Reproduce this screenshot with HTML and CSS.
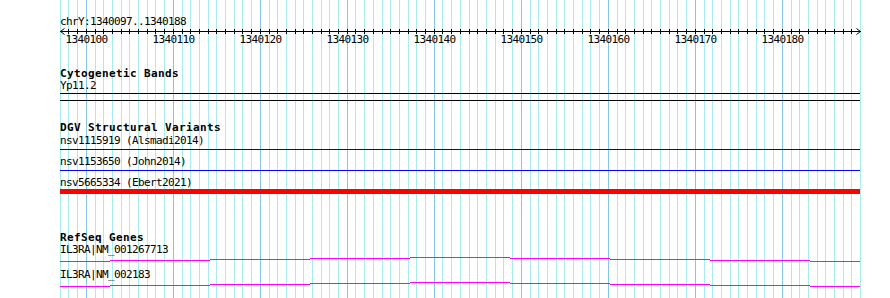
FILE: index.html
```html
<!DOCTYPE html>
<html lang="en">

<head>
    <meta charset="UTF-8">
    <meta name="viewport" content="width=device-width, initial-scale=1.0">
    <title>chrY:1340097..1340188</title>
    <link rel="stylesheet" href="styles.css">
</head>

<body>
    <div class="view">
        <svg class="grid" id="grid" width="890" height="298"></svg>
        <div class="tracks">
            <div class="locus">chrY:1340097..1340188</div>
            <svg class="ruler" id="ruler" width="802" height="20"></svg>

            <div class="track cyto">
                <div class="track_title">Cytogenetic Bands</div>
                <div class="label">Yp11.2</div>
                <div class="band"></div>
            </div>

            <div class="track dgv">
                <div class="track_title">DGV Structural Variants</div>
                <div class="label first">nsv1115919 (Alsmadi2014)</div>
                <div class="sv sv_loss"></div>
                <div class="label">nsv1153650 (John2014)</div>
                <div class="sv sv_gain"></div>
                <div class="label">nsv5665334 (Ebert2021)</div>
                <div class="sv sv_big"></div>
            </div>

            <div class="track genes">
                <div class="track_title">RefSeq Genes</div>
                <div class="label first">IL3RA|NM_001267713</div>
                <svg class="gene" width="800" height="7">
                    <path d="M0 5.5H50M50 4.5H150M150 3.5H250M250 2.5H350M350 1.5H450M450 2.5H550M550 3.5H650M650 4.5H750M750 5.5H800" />
                </svg>
                <div class="label">IL3RA|NM_002183</div>
                <svg class="gene" width="800" height="7">
                    <path d="M0 5.5H50M50 4.5H150M150 3.5H250M250 2.5H350M350 1.5H450M450 2.5H550M550 3.5H650M650 4.5H750M750 5.5H800" />
                </svg>
            </div>
        </div>
    </div>
    <script>
        var start = 1340097;
        var bases = 93;
        var ns = "http://www.w3.org/2000/svg";
        var grid = document.getElementById("grid");
        var ruler = document.getElementById("ruler");

        function col(i) {
            return Math.floor(60.2 + i * 8.7);
        }

        function el(name, attrs, parent) {
            var node = document.createElementNS(ns, name);
            for (var k in attrs) node.setAttribute(k, attrs[k]);
            parent.appendChild(node);
            return node;
        }

        // base line of the ruler, with arrow heads
        el("rect", { x: 0, y: 3, width: 801, height: 1, fill: "#000" }, ruler);
        el("path", { d: "M4.5 0.5L0.5 3.5L4.5 6.5", "class": "arrow" }, ruler);
        el("path", { d: "M796.5 0.5L800.5 3.5L796.5 6.5", "class": "arrow" }, ruler);

        for (var i = 0; i < bases; i++) {
            var x = col(i);
            var major = (start + i) % 10 == 0;
            el("rect", { x: x, y: 0, width: 1, height: 298, "class": major ? "major" : "minor" }, grid);
            if (i > 0 && i < bases - 1) el("rect", { x: x - 60, y: 1, width: 1, height: 5, fill: "#000" }, ruler);
            if (major) {
                var t = el("text", { x: x - 60 + 0.5, y: 14.5, "class": "tick_label" }, ruler);
                t.textContent = start + i;
            }
        }
    </script>
</body>

</html>
```

FILE: styles.css
```css
* {
    box-sizing: border-box;
}

body {
    margin: 0;
    background: #fff;
    color: #000;
    font-family: "DejaVu Sans Mono", "Liberation Mono", monospace;
    font-size: 11px;
    letter-spacing: -0.62px;
    line-height: 12px;
}

.view {
    position: relative;
    width: 890px;
    height: 298px;
    overflow: hidden;
}

.grid {
    position: absolute;
    top: 0;
    left: 0;
}

.grid .minor {
    fill: #a8ecef;
}

.grid .major {
    fill: #86c6ea;
}

.tracks {
    position: relative;
    width: 862px;
    padding-left: 60px;
}

.locus {
    padding-top: 16px;
    height: 28px;
    white-space: nowrap;
}

.ruler {
    display: block;
    overflow: visible;
}

.ruler .arrow {
    fill: none;
    stroke: #000;
    stroke-width: 1;
}

.tick_label {
    font-family: "DejaVu Sans Mono", "Liberation Mono", monospace;
    font-size: 11px;
    letter-spacing: -0.62px;
    text-anchor: middle;
    fill: #000;
}

.track_title {
    font-weight: bold;
    letter-spacing: 0.38px;
    height: 12px;
    white-space: nowrap;
}

.label {
    height: 12px;
    white-space: nowrap;
}

.cyto {
    margin-top: 20px;
}

.band {
    width: 800px;
    height: 8px;
    margin-top: 1px;
    border-top: 1px solid #000;
    border-bottom: 1px solid #000;
}

.dgv {
    margin-top: 21px;
}

.dgv .label {
    margin-top: 6px;
}

.dgv .label.first {
    margin-top: 1px;
}

.sv {
    width: 800px;
}

.sv_loss {
    height: 1px;
    margin-top: 2px;
    background: #0000c8;
}

.sv_gain {
    height: 1px;
    margin-top: 2px;
    background: #0000ff;
}

.sv_big {
    height: 5px;
    background: #ff0000;
}

.genes {
    margin-top: 38px;
}

.genes .label {
    margin-top: 6px;
}

.genes .label.first {
    margin-top: 0;
}

.gene {
    display: block;
}

.gene path {
    fill: none;
    stroke: #ff00ff;
    stroke-width: 1;
    shape-rendering: crispEdges;
}
```
